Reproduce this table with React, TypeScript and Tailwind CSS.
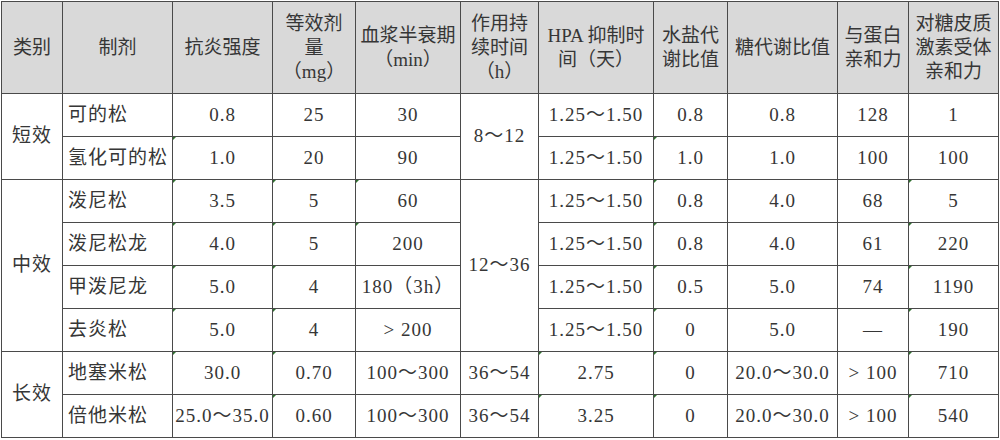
type Cell = { t: string; left?: boolean; mark?: boolean; rowSpan?: number };

const COLS = [61, 110, 100, 83, 105, 78, 115, 74, 110, 71, 90];

const HEAD: string[][] = [
  ["类别"],
  ["制剂"],
  ["抗炎强度"],
  ["等效剂", "量", "（mg）"],
  ["血浆半衰期", "（min）"],
  ["作用持", "续时间", "（h）"],
  ["HPA 抑制时", "间（天）"],
  ["水盐代", "谢比值"],
  ["糖代谢比值"],
  ["与蛋白", "亲和力"],
  ["对糖皮质", "激素受体", "亲和力"],
];

const ROWS: Cell[][] = [
  [
    { t: "短效", rowSpan: 2 },
    { t: "可的松", left: true },
    { t: "0.8" },
    { t: "25" },
    { t: "30" },
    { t: "8～12", rowSpan: 2 },
    { t: "1.25～1.50" },
    { t: "0.8" },
    { t: "0.8" },
    { t: "128" },
    { t: "1" },
  ],
  [
    { t: "氢化可的松", left: true },
    { t: "1.0", mark: true },
    { t: "20" },
    { t: "90" },
    { t: "1.25～1.50" },
    { t: "1.0", mark: true },
    { t: "1.0" },
    { t: "100" },
    { t: "100" },
  ],
  [
    { t: "中效", rowSpan: 4 },
    { t: "泼尼松", left: true },
    { t: "3.5", mark: true },
    { t: "5", mark: true },
    { t: "60", mark: true },
    { t: "12～36", rowSpan: 4 },
    { t: "1.25～1.50" },
    { t: "0.8", mark: true },
    { t: "4.0" },
    { t: "68" },
    { t: "5", mark: true },
  ],
  [
    { t: "泼尼松龙", left: true },
    { t: "4.0", mark: true },
    { t: "5", mark: true },
    { t: "200", mark: true },
    { t: "1.25～1.50" },
    { t: "0.8", mark: true },
    { t: "4.0" },
    { t: "61" },
    { t: "220", mark: true },
  ],
  [
    { t: "甲泼尼龙", left: true },
    { t: "5.0", mark: true },
    { t: "4", mark: true },
    { t: "180（3h）" },
    { t: "1.25～1.50" },
    { t: "0.5", mark: true },
    { t: "5.0" },
    { t: "74" },
    { t: "1190", mark: true },
  ],
  [
    { t: "去炎松", left: true },
    { t: "5.0", mark: true },
    { t: "4", mark: true },
    { t: "> 200" },
    { t: "1.25～1.50" },
    { t: "0", mark: true },
    { t: "5.0" },
    { t: "—" },
    { t: "190", mark: true },
  ],
  [
    { t: "长效", rowSpan: 2 },
    { t: "地塞米松", left: true },
    { t: "30.0", mark: true },
    { t: "0.70", mark: true },
    { t: "100～300" },
    { t: "36～54" },
    { t: "2.75", mark: true },
    { t: "0", mark: true },
    { t: "20.0～30.0" },
    { t: "> 100" },
    { t: "710", mark: true },
  ],
  [
    { t: "倍他米松", left: true },
    { t: "25.0～35.0" },
    { t: "0.60", mark: true },
    { t: "100～300" },
    { t: "36～54" },
    { t: "3.25", mark: true },
    { t: "0", mark: true },
    { t: "20.0～30.0" },
    { t: "> 100" },
    { t: "540", mark: true },
  ],
];

function Mark() {
  return (
    <span className="absolute left-0 top-0 h-0 w-0 border-t-[3px] border-r-[3px] border-t-[#2f6f2f] border-r-transparent" />
  );
}

export default function App() {
  return (
    <div className="h-[440px] w-[1000px] overflow-hidden bg-white pl-[1px] pt-[1px] font-['Liberation_Serif','Noto_Sans_CJK_SC',serif] text-[19px] text-[#363636]">
      <table className="w-[998px] table-fixed border-collapse">
        <colgroup>
          {COLS.map((w, i) => (
            <col key={i} style={{ width: `${w}px` }} />
          ))}
        </colgroup>
        <thead>
          <tr className="h-[92px] bg-[#d9d9d9]">
            {HEAD.map((lines, i) => (
              <th
                key={i}
                className="border border-[#4a4a4a] p-0 text-center align-middle font-normal leading-[24px] whitespace-nowrap"
              >
                {lines.map((l, j) => (
                  <div key={j}>{l}</div>
                ))}
              </th>
            ))}
          </tr>
        </thead>
        <tbody>
          {ROWS.map((row, r) => (
            <tr key={r} className="h-[43px] bg-white">
              {row.map((c, i) => (
                <td
                  key={i}
                  rowSpan={c.rowSpan}
                  className={
                    "relative border border-[#4a4a4a] p-0 align-middle whitespace-nowrap tracking-[1px] " +
                    (c.left ? "pl-[5px] text-left" : "text-center")
                  }
                >
                  {c.mark && <Mark />}
                  {c.t}
                </td>
              ))}
            </tr>
          ))}
        </tbody>
      </table>
    </div>
  );
}
